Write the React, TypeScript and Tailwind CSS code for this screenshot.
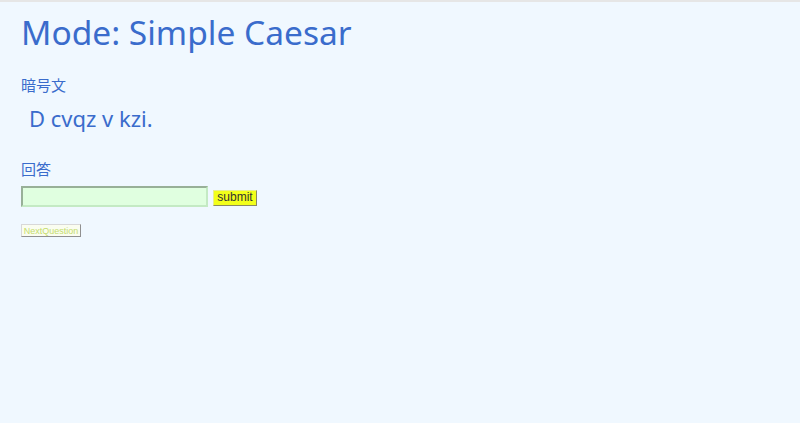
export default function App() {
  return (
    <div className="min-h-[423px] w-full bg-[#f0f8ff] border-t-2 border-[#e6e6e6] px-[21px] text-[#3a6ccc] [font-family:'Noto_Sans','Noto_Sans_CJK_JP',sans-serif]">
      <h1 className="pt-[10px] text-[33.5px] leading-[40px] font-normal">Mode: Simple Caesar</h1>

      <div className="mt-[24px] text-[15px] leading-[18px] [font-family:'Noto_Sans_CJK_JP',sans-serif]">暗号文</div>
      <div className="mt-[11px] pl-[8px] text-[22px] leading-[26px]">D cvqz v kzi.</div>

      <div className="mt-[29px] text-[15px] leading-[18px] [font-family:'Noto_Sans_CJK_JP',sans-serif]">回答</div>
      <div className="mt-[8px] flex items-center gap-[5px]">
        <input
          type="text"
          className="h-[21px] w-[187px] bg-[#e0ffe0] border-2 border-t-[#98b098] border-l-[#98b098] border-b-[#c4eac4] border-r-[#c4eac4] outline-none"
        />
        <button className="mt-[2px] h-[16px] w-[44px] bg-[#f2ff1a] border border-t-[#e8ee90] border-l-[#e8ee90] border-b-[#8a8a60] border-r-[#8a8a60] text-[12px] leading-[13px] text-[#333] [font-family:'Liberation_Sans',sans-serif]">
          submit
        </button>
      </div>

      <button className="mt-[17px] h-[13px] w-[60px] bg-[#fafdf0] border border-t-[#d8d8d8] border-l-[#d8d8d8] border-b-[#909090] border-r-[#909090] text-[9px] leading-[10px] text-[#c4dc6c] [font-family:'Liberation_Sans',sans-serif]">
        NextQuestion
      </button>
    </div>
  );
}
